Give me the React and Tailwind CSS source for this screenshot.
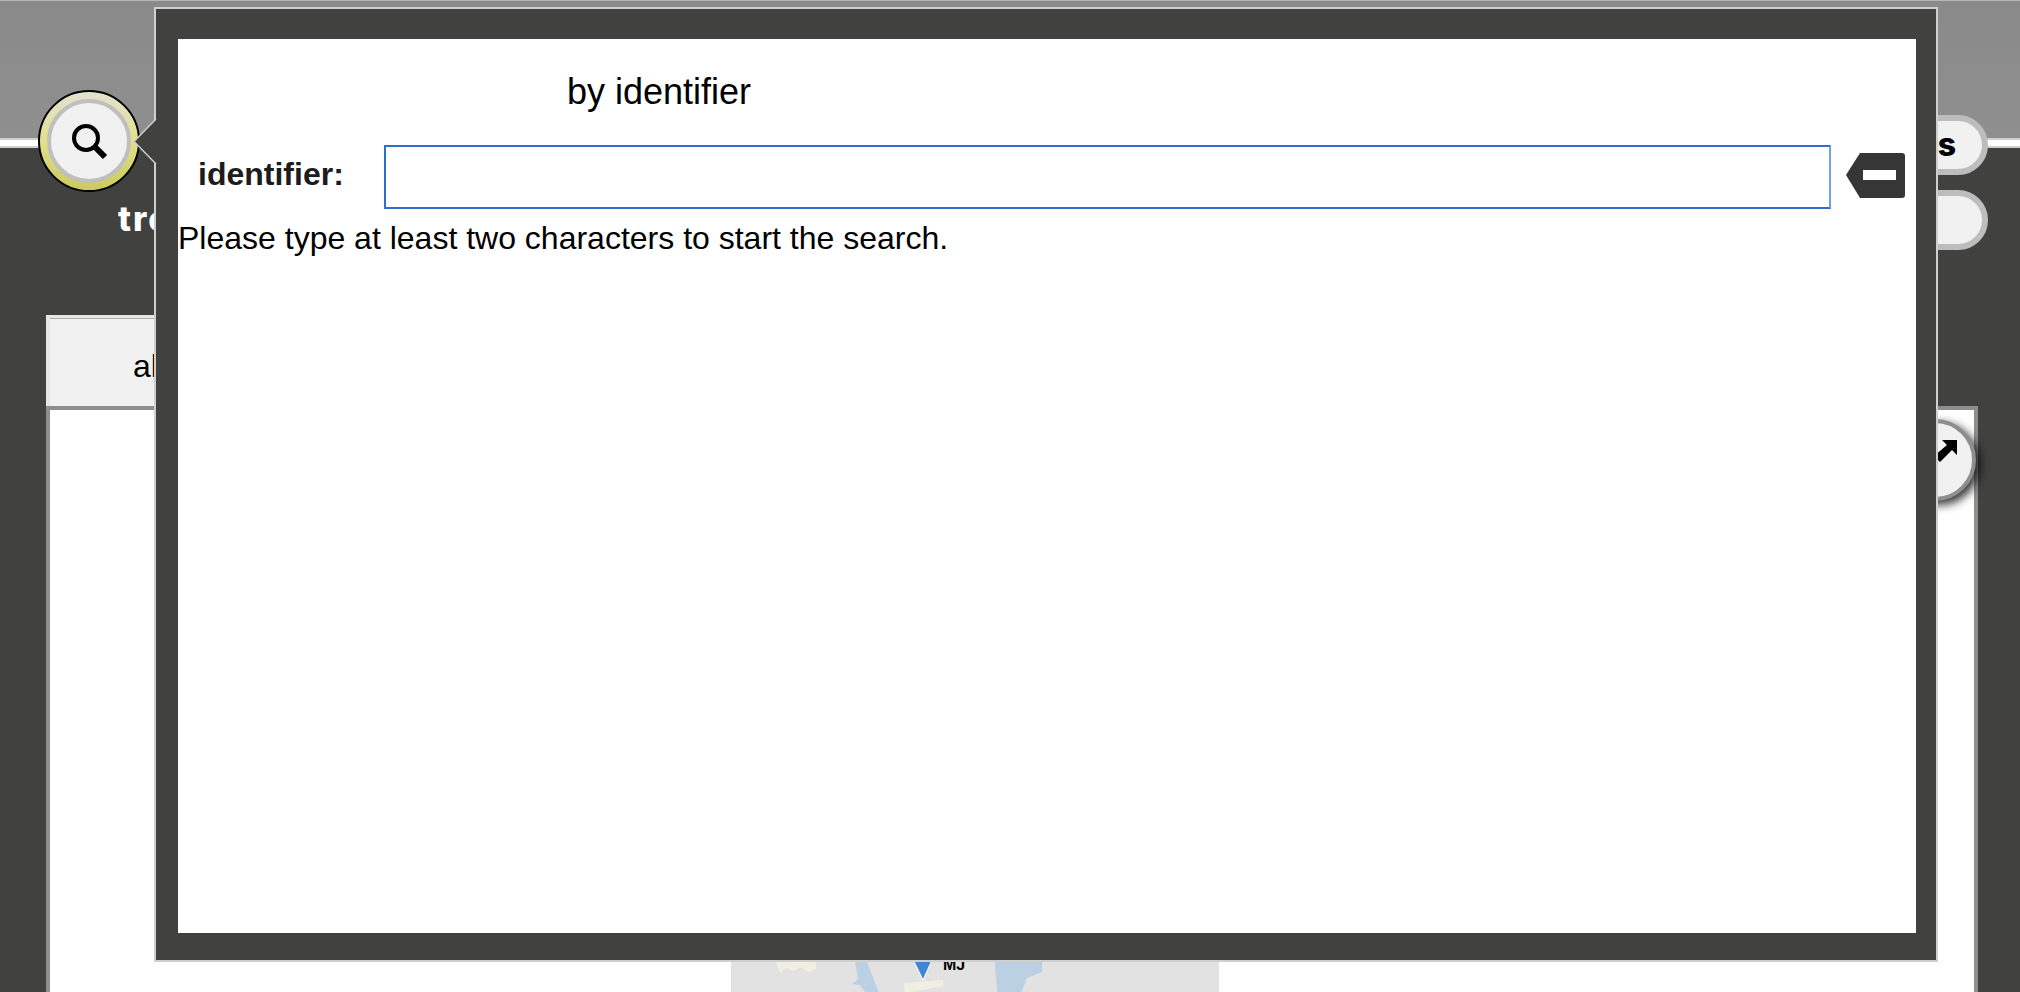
import React from 'react';

const SearchBadge = () => (
  <div className="w-[102px] h-[102px] rounded-full border-2 border-black bg-gradient-to-b from-[#e2e1cf] via-[#e2e08a] to-[#ccca5c] flex items-center justify-center">
    <div className="w-[84px] h-[84px] rounded-full border-4 border-[#bfbfbf] bg-[#f1f1f1] flex items-center justify-center">
      <svg width="44" height="44" viewBox="0 0 44 44" fill="none" stroke="#000">
        <circle cx="19" cy="19" r="12" strokeWidth="4" />
        <path d="M27 27 L38 38" strokeWidth="6" />
      </svg>
    </div>
  </div>
);

const Pill = ({ children }) => (
  <div className="w-[120px] h-[60px] rounded-r-[30px] border-[6px] border-[#bdbdbd] bg-[#f1f1f1] flex items-center justify-end pr-[26px]">
    {children}
  </div>
);

const MapPreview = () => (
  <div className="relative ml-[681px] mt-[489px] w-[488px] h-[200px] bg-[#e2e2e2]">
    <svg width="488" height="200" viewBox="731 900 488 200">
      <path d="M773 955 L816 955 L816 970 L808 973 L800 968 L794 972 L786 969 L780 974 Z" fill="#f1efe0" />
      <path d="M854 955 L864 955 L880 997 L868 997 L860 986 L852 985 L858 980 Z" fill="#bcd0e4" />
      <path d="M994 955 L1042 955 L1042 973 L1027 979 L1020 997 L998 997 L996 979 Z" fill="#bcd0e4" />
      <path d="M903.5 984 L943 981 L943.5 987 L905 994 Z" fill="#f1efe0" />
      <path d="M908 950 L937 950 L923 981 Z" fill="#3f88d1" stroke="#ffffff" strokeWidth="1" />
    </svg>
    <span className="absolute left-[212px] top-[57px] text-[16px] leading-[18px] font-bold text-black">MJ</span>
  </div>
);

export default function App() {
  return (
    <div className="relative h-[992px] w-[2020px] overflow-hidden bg-[#414140] font-['Liberation_Sans',sans-serif]">
      {/* header */}
      <div className="h-[138px] border-t border-t-[#b5b5b5] bg-gradient-to-b from-[#8a8a8a] to-[#8f8f8f]" />
      <div className="h-[10px] bg-white border-y-2 border-[#cfcfcf]" />

      {/* tabs and panel */}
      <div className="pt-[167px] px-[46px]">
        <div className="w-[300px] h-[91px] bg-[#f1f1f1] border-l-4 border-t-[3px] border-[#e6e6e6]">
          <div className="h-full border-t border-[#b0b0b0] flex items-center pl-[83px] pt-[6px] text-[32px] text-black">
            all
          </div>
        </div>
        <div className="w-[1932px] h-[600px] bg-white border-4 border-[#8e8e8e]">
          <MapPreview />
        </div>
      </div>

      {/* header controls, they sit over the band */}
      <div className="absolute inset-x-0 top-[90px] flex justify-between pl-[38px] pr-[32px]">
        <div className="flex flex-col">
          <SearchBadge />
          <span className="ml-[80px] mt-[9px] text-[34px] leading-[36px] tracking-[2px] font-extrabold text-white font-['Inter',sans-serif]">tre</span>
        </div>
        <div className="flex flex-col gap-[15px] pt-[25px]">
          <Pill>
            <span className="font-['Inter',sans-serif] font-extrabold text-[32px] leading-[36px] text-black">s</span>
          </Pill>
          <Pill />
        </div>
      </div>

      {/* expand button */}
      <div className="absolute left-[1894px] top-[419px] w-[82px] h-[82px] rounded-full border-4 border-[#8e8e8e] bg-[#f1f1f1] shadow-[4px_4px_10px_rgba(0,0,0,0.8)]">
        <svg className="absolute left-[32px] top-[17px]" width="28" height="24" viewBox="0 0 28 24">
          <path d="M12 0 L27 0 L27 15 L22 10 L10 22 L4 16 L17 5 Z" fill="#000" />
        </svg>
      </div>

      {/* search dialog */}
      <div className="absolute left-[154px] top-[7px] w-[1784px] h-[955px] border-2 border-[#cfcfcf] bg-[#414140] pl-[22px] pr-[20px] pt-[30px] pb-[27px]">
        <div className="h-full bg-white text-black">
          <div className="pl-[389px] pt-[32px] text-[36px] leading-[42px]">by identifier</div>
          <div className="flex items-center mt-[32px]">
            <label className="pl-[20px] w-[206px] text-[32px] font-bold text-[#1c1c1c] -mt-[7px]">identifier:</label>
            <input className="w-[1447px] h-[64px] border-2 border-[#2f6fcc] border-r-[#6ea2e6] outline-none bg-white" />
            <svg className="ml-[15px] -mt-[3px]" width="59" height="45" viewBox="0 0 59 45">
              <path d="M14 0 L56 0 Q59 0 59 3 L59 42 Q59 45 56 45 L14 45 L0 22 Z" fill="#363636" />
              <rect x="17" y="17" width="33" height="10" fill="#fff" />
            </svg>
          </div>
          <p className="mt-[11px] text-[32px] leading-[36px]">Please type at least two characters to start the search.</p>
        </div>
        <svg className="absolute left-[-23px] top-[109px]" width="25" height="47" viewBox="0 0 25 47">
          <path d="M24 0 L1 23.5 L24 47 L25 47 L25 0 Z" fill="#414140" />
          <path d="M23 1 L1 23.5 L23 46" fill="none" stroke="#cfcfcf" strokeWidth="1.5" />
        </svg>
      </div>
    </div>
  );
}
